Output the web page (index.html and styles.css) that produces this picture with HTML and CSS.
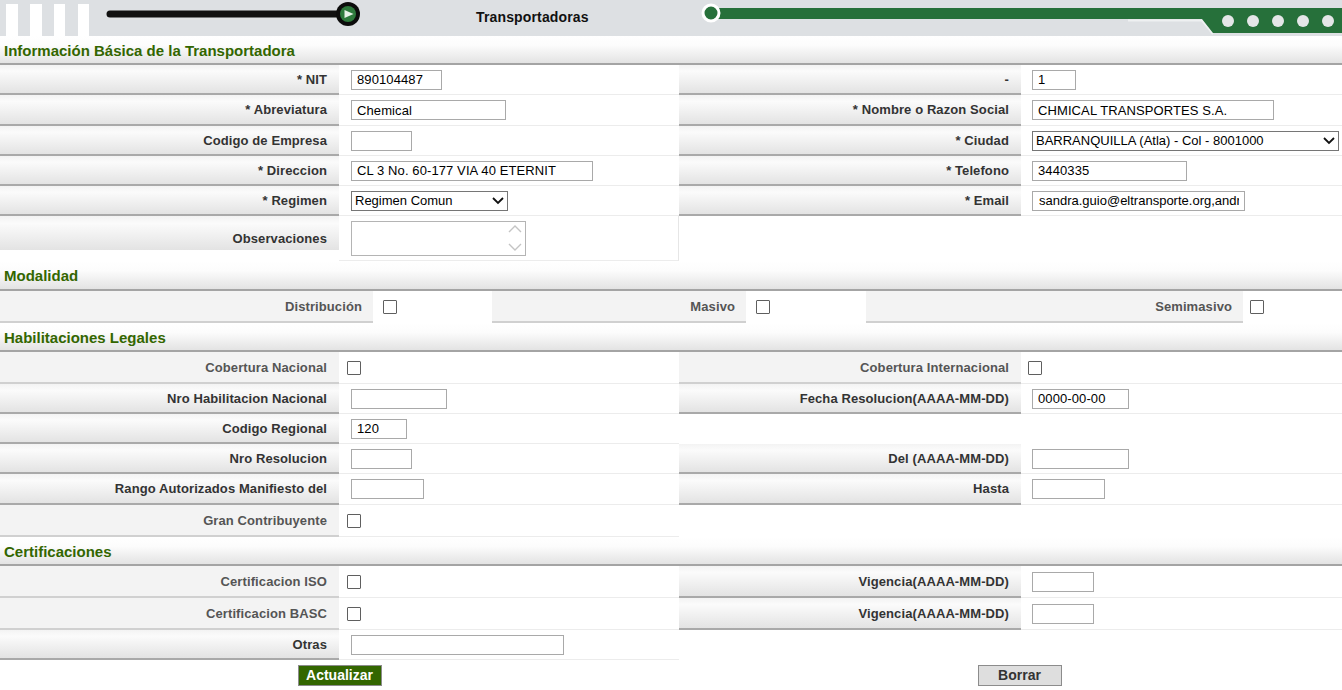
FILE: index.html
```html
<!DOCTYPE html>
<html lang="es">
<head>
<meta charset="utf-8">
<title>Transportadoras</title>
<link rel="stylesheet" href="styles.css">
</head>
<body>
<div class="header">
  <svg class="hdr-left" width="476" height="36" viewBox="0 0 476 36">
    <rect x="6" y="4" width="12" height="32" fill="#fff"/>
    <rect x="30" y="4" width="12" height="32" fill="#fff"/>
    <rect x="54" y="4" width="11" height="32" fill="#fff"/>
    <rect x="78" y="4" width="11" height="32" fill="#fff"/>
    <line x1="110" y1="14" x2="344" y2="14" stroke="#101010" stroke-width="7" stroke-linecap="round"/>
    <circle cx="348" cy="14" r="12" fill="#0c0c0c"/>
    <circle cx="348" cy="14" r="8" fill="#2e7a3c"/>
    <polygon points="344.5,10 353.5,14 344.5,18" fill="#e8f2e8"/>
  </svg>
  <span class="hdr-title">Transportadoras</span>
  <svg class="hdr-right" width="644" height="36" viewBox="0 0 644 36">
    <polyline points="430,20.5 504,20.5 515,34" fill="none" stroke="#eef0f1" stroke-width="2"/>
    <polygon points="18,8 644,8 644,33 515,33 504,19 18,19" fill="#26703a"/>
    <circle cx="13" cy="13" r="8" fill="#26703a" stroke="#fff" stroke-width="3"/>
    <circle cx="530" cy="21" r="6" fill="#e4e6e7"/>
    <circle cx="555" cy="21" r="6" fill="#e4e6e7"/>
    <circle cx="580" cy="21" r="6" fill="#e4e6e7"/>
    <circle cx="605" cy="21" r="6" fill="#e4e6e7"/>
    <circle cx="630" cy="21" r="6" fill="#e4e6e7"/>
  </svg>
</div>

<div class="sec">Información Básica de la Transportadora</div>
<div class="g4 info">
  <div class="lbl">* NIT</div>
  <div class="val"><input class="w90" type="text" value="890104487"></div>
  <div class="lbl">-</div>
  <div class="val r"><input class="w44" type="text" value="1"></div>

  <div class="lbl">* Abreviatura</div>
  <div class="val"><input class="w155" type="text" value="Chemical"></div>
  <div class="lbl">* Nombre o Razon Social</div>
  <div class="val r"><input class="w242" type="text" value="CHMICAL TRANSPORTES S.A."></div>

  <div class="lbl">Codigo de Empresa</div>
  <div class="val"><input class="w61" type="text" value=""></div>
  <div class="lbl">* Ciudad</div>
  <div class="val r"><span class="sel-wrap w307"><select><option>BARRANQUILLA (Atla) - Col - 8001000</option></select><svg class="chev" width="12" height="8" viewBox="0 0 12 8"><polyline points="1,1 6,6 11,1" fill="none" stroke="#111" stroke-width="1.8"/></svg></span></div>

  <div class="lbl">* Direccion</div>
  <div class="val"><input class="w242" type="text" value="CL 3 No. 60-177 VIA 40 ETERNIT"></div>
  <div class="lbl">* Telefono</div>
  <div class="val r"><input class="w155" type="text" value="3440335"></div>

  <div class="lbl">* Regimen</div>
  <div class="val"><span class="sel-wrap w157"><select><option>Regimen Comun</option></select><svg class="chev" width="12" height="8" viewBox="0 0 12 8"><polyline points="1,1 6,6 11,1" fill="none" stroke="#111" stroke-width="1.8"/></svg></span></div>
  <div class="lbl">* Email</div>
  <div class="val r"><input class="w213 tight" type="text" value="sandra.guio@eltransporte.org,andres@eltransporte.org"></div>

  <div class="lbl obs">Observaciones</div>
  <div class="val obs-val"><span class="ta-wrap"><textarea></textarea><svg class="ta-arrows" width="16" height="32" viewBox="0 0 16 32"><polyline points="2,10 8,4 14,10" fill="none" stroke="#c4c4c4" stroke-width="1.4"/><polyline points="2,22 8,28 14,22" fill="none" stroke="#c4c4c4" stroke-width="1.4"/></svg></span></div>
  <div class="blank"></div>
  <div class="blank"></div>
</div>

<div class="sec sec30">Modalidad</div>
<div class="g6">
  <div class="lbl flat m">Distribución</div>
  <div class="chk-cell"><input type="checkbox"></div>
  <div class="lbl flat m">Masivo</div>
  <div class="chk-cell"><input type="checkbox"></div>
  <div class="lbl flat m">Semimasivo</div>
  <div class="chk-cell last"><input type="checkbox"></div>
</div>

<div class="sec">Habilitaciones Legales</div>
<div class="g4 hab">
  <div class="lbl flat">Cobertura Nacional</div>
  <div class="val c"><input type="checkbox"></div>
  <div class="lbl flat">Cobertura Internacional</div>
  <div class="val r c"><input type="checkbox"></div>

  <div class="lbl">Nro Habilitacion Nacional</div>
  <div class="val"><input class="w96" type="text" value=""></div>
  <div class="lbl">Fecha Resolucion(AAAA-MM-DD)</div>
  <div class="val r"><input class="w97" type="text" value="0000-00-00"></div>

  <div class="lbl">Codigo Regional</div>
  <div class="val"><input class="w56" type="text" value="120"></div>
  <div class="blank"></div>
  <div class="blank"></div>

  <div class="lbl">Nro Resolucion</div>
  <div class="val"><input class="w61" type="text" value=""></div>
  <div class="lbl">Del (AAAA-MM-DD)</div>
  <div class="val r"><input class="w97" type="text" value=""></div>

  <div class="lbl">Rango Autorizados Manifiesto del</div>
  <div class="val"><input class="w73" type="text" value=""></div>
  <div class="lbl">Hasta</div>
  <div class="val r"><input class="w73" type="text" value=""></div>

  <div class="lbl flat">Gran Contribuyente</div>
  <div class="val c"><input type="checkbox"></div>
  <div class="blank"></div>
  <div class="blank"></div>
</div>

<div class="sec">Certificaciones</div>
<div class="g4 cert">
  <div class="lbl flat">Certificacion ISO</div>
  <div class="val c"><input type="checkbox"></div>
  <div class="lbl">Vigencia(AAAA-MM-DD)</div>
  <div class="val r"><input class="w62" type="text" value=""></div>

  <div class="lbl flat">Certificacion BASC</div>
  <div class="val c"><input type="checkbox"></div>
  <div class="lbl">Vigencia(AAAA-MM-DD)</div>
  <div class="val r"><input class="w62" type="text" value=""></div>

  <div class="lbl">Otras</div>
  <div class="val"><input class="w213" type="text" value=""></div>
  <div class="blank"></div>
  <div class="blank"></div>
</div>

<div class="actions">
  <button class="btn btn-green" type="button">Actualizar</button>
  <button class="btn btn-gray" type="button">Borrar</button>
</div>
</body>
</html>
```

FILE: styles.css
```css
html, body {
  margin: 0;
  padding: 0;
  background: #fff;
}
body {
  font-family: "Liberation Sans", Arial, sans-serif;
  font-size: 13px;
  color: #333;
  width: 1342px;
  overflow: hidden;
}

/* header */
.header {
  display: flex;
  align-items: center;
  height: 36px;
  background: #dde0e3;
}
.hdr-left, .hdr-right {
  display: block;
  flex: none;
}
.hdr-title {
  font-weight: bold;
  font-size: 14px;
  color: #111;
  line-height: 36px;
  margin-top: -2px;
  letter-spacing: 0.15px;
}
.hdr-right {
  margin-left: auto;
}

/* section titles */
.sec {
  height: 29px;
  box-sizing: border-box;
  border-bottom: 2px solid #a4a4a4;
  background: linear-gradient(#ffffff 0%, #fcfcfc 35%, #e3e3e3 100%);
  color: #336600;
  font-weight: bold;
  font-size: 15px;
  padding-left: 4px;
  padding-top: 1px;
  display: flex;
  align-items: center;
}
.sec30 {
  height: 30px;
}

/* grids */
.g4 {
  display: grid;
  grid-template-columns: 339px 340px 342px 1fr;
}
.info {
  grid-template-rows: 30px 31px 30px 30px 30px 45px;
}
.hab {
  grid-template-rows: 32px 30px 30px 30px 31px 32px;
}
.cert {
  grid-template-rows: 32px 32px 30px;
}
.g6 {
  display: grid;
  grid-template-columns: 373px 119px 254px 120px 377px 1fr;
  grid-template-rows: 32px;
}

.lbl {
  box-sizing: border-box;
  border-bottom: 2px solid #a9a9a9;
  background: linear-gradient(#f3f3f3 0%, #fbfbfb 22%, #e3e3e3 100%);
  display: flex;
  align-items: center;
  justify-content: flex-end;
  padding-right: 12px;
  font-weight: bold;
  color: #333;
  white-space: nowrap;
  letter-spacing: 0.1px;
}
.lbl.flat {
  background: #f3f3f3;
  border-bottom: 2px solid #d0d0d0;
  color: #555;
}
.lbl.m {
  padding-right: 11px;
}
.lbl.obs {
  border-bottom: none;
  background: linear-gradient(#f3f3f3 0%, #fbfbfb 22%, #e3e3e3 100%) top left / 100% 34px no-repeat;
}

.val {
  box-sizing: border-box;
  border-bottom: 1px solid #ececec;
  display: flex;
  align-items: center;
  padding-left: 12px;
}
.val.r {
  padding-left: 11px;
}
.val.c {
  padding-left: 8px;
}
.val.r.c {
  padding-left: 7px;
}
.obs-val {
  border-right: 1px solid #e6e6e6;
}
.blank {
  background: #fff;
}

.chk-cell {
  display: flex;
  align-items: center;
  padding-left: 10px;
  background: #fff;
}
.chk-cell.last {
  padding-left: 7px;
}

/* controls */
input[type="text"] {
  box-sizing: border-box;
  height: 20px;
  border: 1px solid #a9a9a9;
  padding: 0 5px;
  margin: 0;
  font-family: "Liberation Sans", Arial, sans-serif;
  font-size: 13px;
  letter-spacing: 0.1px;
  color: #000;
  background: #fff;
  outline: none;
}
input[type="text"].tight {
  letter-spacing: 0;
  padding-left: 6px;
}
input[type="checkbox"] {
  -webkit-appearance: none;
  appearance: none;
  box-sizing: border-box;
  width: 14px;
  height: 14px;
  margin: 0;
  border: 1px solid #5f5f5f;
  border-radius: 1px;
  background: #fff;
}

.w44 { width: 44px; }
.w56 { width: 56px; }
.w61 { width: 61px; }
.w62 { width: 62px; }
.w73 { width: 73px; }
.w90 { width: 91px; }
.w96 { width: 96px; }
.w97 { width: 97px; }
.w155 { width: 155px; }
.w157 { width: 157px; }
.w213 { width: 213px; }
.w242 { width: 242px; }
.w307 { width: 307px; }

.sel-wrap {
  position: relative;
  display: block;
  height: 20px;
}
.sel-wrap select {
  -webkit-appearance: none;
  appearance: none;
  box-sizing: border-box;
  width: 100%;
  height: 20px;
  margin: 0;
  border: 1px solid #767676;
  border-radius: 0;
  background: #fff;
  padding: 0 0 0 3px;
  font-family: "Liberation Sans", Arial, sans-serif;
  font-size: 13px;
  color: #000;
  outline: none;
}
.chev {
  position: absolute;
  right: 4px;
  top: 6px;
  pointer-events: none;
}

.ta-wrap {
  position: relative;
  display: block;
  width: 175px;
  height: 35px;
}
.ta-wrap textarea {
  box-sizing: border-box;
  display: block;
  width: 175px;
  height: 35px;
  margin: 0;
  border: 1px solid #b4b4b4;
  resize: none;
  overflow: hidden;
  font-family: "Liberation Sans", Arial, sans-serif;
  font-size: 13px;
  outline: none;
}
.ta-arrows {
  position: absolute;
  right: 3px;
  top: 1px;
  pointer-events: none;
}

/* buttons */
.actions {
  display: grid;
  grid-template-columns: 679px 1fr;
  justify-items: center;
  padding-top: 5px;
}
.btn {
  box-sizing: border-box;
  width: 84px;
  height: 21px;
  padding: 0;
  font-family: "Liberation Sans", Arial, sans-serif;
  font-weight: bold;
  font-size: 14px;
  border: 1px solid #8c8c8c;
  border-radius: 0;
  line-height: 19px;
}
.btn-green {
  background: #336600;
  color: #fff;
}
.btn-gray {
  background: #dedede;
  color: #333;
  margin-left: 18px;
}
```
